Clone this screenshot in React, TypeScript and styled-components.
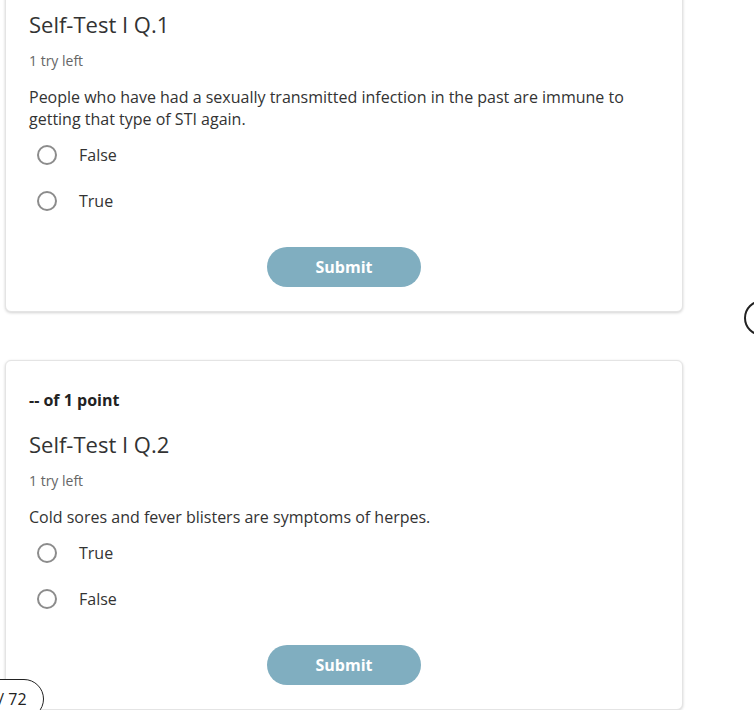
import styled, { createGlobalStyle } from "styled-components";

const GlobalStyle = createGlobalStyle`
  html, body {
    margin: 0;
    padding: 0;
    background: #ffffff;
    overflow: hidden;
  }
  body {
    font-family: "Open Sans", "Liberation Sans", sans-serif;
    color: #333333;
  }
`;

const Page = styled.main`
  display: flex;
  flex-direction: column;
  gap: 48px;
  margin-top: -60px;
  padding-left: 5px;
  padding-bottom: 40px;
`;

const Card = styled.section`
  width: 678px;
  box-sizing: border-box;
  background: #ffffff;
  border: 1px solid #e4e4e4;
  border-radius: 6px;
  box-shadow: 0 1px 3px rgba(0, 0, 0, 0.18);
  padding: 28px 23px 24px;
  display: flex;
  flex-direction: column;
`;

const Points = styled.div`
  font-size: 16px;
  line-height: 22px;
  font-weight: 700;
  color: #222222;
  margin-bottom: 18px;
`;

const Title = styled.h2`
  margin: 0 0 12px;
  font-size: 22px;
  line-height: 30px;
  font-weight: 400;
  color: #333333;
`;

const Tries = styled.div`
  font-size: 14px;
  line-height: 20px;
  color: #666666;
  margin-bottom: 15px;
`;

const Question = styled.p`
  margin: 0 0 2px;
  font-size: 16px;
  line-height: 22px;
  color: #333333;
`;

const Options = styled.div`
  display: flex;
  flex-direction: column;
`;

const Option = styled.label`
  display: flex;
  align-items: center;
  height: 46px;
  padding-left: 8px;
  gap: 22px;
  font-size: 16px;
  color: #333333;
`;

const Radio = styled.span`
  width: 20px;
  height: 20px;
  box-sizing: border-box;
  border: 2px solid #8c8c8c;
  border-radius: 50%;
  flex-shrink: 0;
`;

const Actions = styled.div`
  display: flex;
  justify-content: center;
  margin-top: 23px;
`;

const SubmitButton = styled.button`
  width: 154px;
  height: 40px;
  border: none;
  border-radius: 20px;
  background: #80aec0;
  color: #ffffff;
  font-family: "Open Sans", "Liberation Sans", sans-serif;
  font-size: 16px;
  font-weight: 700;
  cursor: pointer;
`;

const NextButton = styled.button`
  position: fixed;
  left: 744px;
  top: 300px;
  width: 36px;
  height: 36px;
  border: 2px solid #222222;
  border-radius: 50%;
  background: #ffffff;
`;

const PageCounter = styled.div`
  position: fixed;
  left: -30px;
  top: 679px;
  height: 40px;
  box-sizing: border-box;
  padding: 0 16px 0 14px;
  border: 1.5px solid #222222;
  border-radius: 20px;
  background: #ffffff;
  display: flex;
  align-items: center;
  font-size: 16px;
  color: #222222;
`;

type Quiz = {
  id: number;
  question: string;
  options: string[];
};

const quizzes: Quiz[] = [
  {
    id: 1,
    question:
      "People who have had a sexually transmitted infection in the past are immune to getting that type of STI again.",
    options: ["False", "True"],
  },
  {
    id: 2,
    question: "Cold sores and fever blisters are symptoms of herpes.",
    options: ["True", "False"],
  },
];

const QuizCard = ({ quiz }: { quiz: Quiz }) => (
  <Card>
    <Points>-- of 1 point</Points>
    <Title>Self-Test I Q.{quiz.id}</Title>
    <Tries>1 try left</Tries>
    <Question>{quiz.question}</Question>
    <Options>
      {quiz.options.map((opt) => (
        <Option key={opt}>
          <Radio />
          {opt}
        </Option>
      ))}
    </Options>
    <Actions>
      <SubmitButton>Submit</SubmitButton>
    </Actions>
  </Card>
);

export default function App() {
  return (
    <>
      <GlobalStyle />
      <Page>
        {quizzes.map((q) => (
          <QuizCard key={q.id} quiz={q} />
        ))}
      </Page>
      <NextButton aria-label="Next" />
      <PageCounter>1 / 72</PageCounter>
    </>
  );
}
